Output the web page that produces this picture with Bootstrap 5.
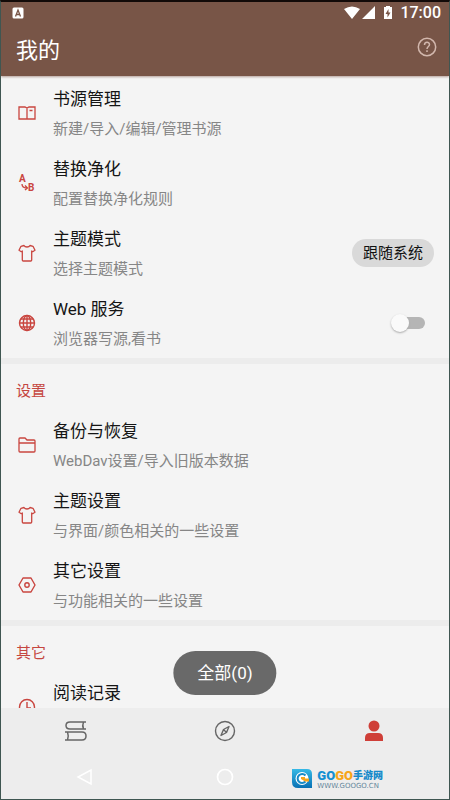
<!DOCTYPE html>
<html lang="zh-CN">
<head>
<meta charset="utf-8">
<meta name="viewport" content="width=device-width, initial-scale=1">
<title>我的</title>
<link href="https://cdn.jsdelivr.net/npm/bootstrap@5.3.0/dist/css/bootstrap.min.css" rel="stylesheet">
<style>
body{font-family:Roboto,"Noto Sans CJK SC",sans-serif;background:#f4f4f4;color:#151515}
.app{height:100vh;border:1px solid #3f5651;border-top:2px solid #120a08;overflow:hidden}
.top{background:#785547;color:#fff;box-shadow:0 1px 2px #b5a09a;z-index:1}
.status{height:22px;padding:0 8px 0 11px;font-size:16px;line-height:22px;font-weight:500}
.bar{height:52px;padding:1px 12px 0 15px}
.bar h1{font-size:22px;line-height:32px;font-weight:400}
.list-area{min-height:0;overflow:hidden}
.group + .group{border-top:6px solid #ececec}
.group:first-child{padding-top:2px}
.group h2{height:46px;padding:15px 15px 0;font-size:15px;line-height:24px;font-weight:400;color:#c5463f}
.entry{height:70px;padding:0 15px;color:inherit}
.entry-icon{width:22px;height:22px;color:#c9453f}
.entry-text{padding:8px 0 0 15px;align-self:flex-start}
.entry-title{font-size:17px;line-height:26px}
.entry-note{font-size:15px;line-height:22px;color:#868686;padding-top:6px}
.pill{background:#d9d9d9;font-size:15px;line-height:20px;padding:4px 11px;color:#111}
.toggle{appearance:none;width:30px;height:12px;border-radius:6px;background:#b5b5b5;margin:0 9px 0 0;position:relative}
.toggle::before{content:"";position:absolute;left:-4px;top:-3px;width:18px;height:18px;border-radius:50%;background:#fafafa;box-shadow:0 1px 2px #aaa}
.toggle:checked::before{left:16px}
.tabs{height:46px;background:#ededed}
.tabs a{color:#666}
.tabs a.active{color:#cf3f38}
.sysnav{height:45px;background:#ededed;color:#fff}
.sysnav button{color:#fff;line-height:1}
.toast-pill{position:absolute;left:50%;bottom:104px;transform:translateX(-50%);background:#696969;color:#fff;font-size:17px;line-height:24px;padding:10px 24px}
.brand{padding-right:66px}
.brand-name{font-size:13px;line-height:15px;font-weight:900}
.brand-name small{font-size:10px;color:#1689ca;font-weight:900}
.brand-go{color:#158fd2}.brand-go2{color:#f6a51b}
.brand-url{font-family:"DejaVu Sans",sans-serif;font-size:7px;line-height:6px;color:#65879b}
</style>
<script src="https://cdn.jsdelivr.net/npm/bootstrap@5.3.0/dist/js/bootstrap.bundle.min.js"></script>
</head>
<body>
<svg class="d-none" aria-hidden="true">
<symbol id="book" viewBox="0 0 22 22"><path d="M3 5h6l2 1 2-1h6v12H3zM11 6v11M13.500 8.500h3" fill="none" stroke="currentColor" stroke-width="1.300"/></symbol>
<symbol id="swap" viewBox="0 0 22 22"><path d="M6 12c0 3 2 4 5 4M9 13.500l2.500 2.500L9 18" fill="none" stroke="currentColor" stroke-width="1.300"/><text x="3" y="10" font-size="10" font-weight="700" fill="currentColor">A</text><text x="12" y="19" font-size="10" font-weight="700" fill="currentColor">B</text></symbol>
<symbol id="shirt" viewBox="0 0 22 22"><path d="M8 3.500c1 2 5 2 6 0l3 .8 2 4-2.300 1.400-1-.7V18q0 1-1 1H7.300q-1 0-1-1V9l-1 .7L3 8.300l2-4z" fill="none" stroke="currentColor" stroke-width="1.300" stroke-linejoin="round"/></symbol>
<symbol id="globe" viewBox="0 0 22 22"><g fill="none" stroke="currentColor" stroke-width="1.400"><circle cx="11" cy="11" r="7.500"/><ellipse cx="11" cy="11" rx="3.700" ry="7.500"/><path d="M11 3v16M3 11h16M4.500 7h13M4.500 15h13"/></g></symbol>
<symbol id="folder" viewBox="0 0 22 22"><path d="M4 4h5l2 2h7q1 0 1 1v10q0 1-1 1H4q-1 0-1-1V5q0-1 1-1zM3 9h16" fill="none" stroke="currentColor" stroke-width="1.300"/></symbol>
<symbol id="hex" viewBox="0 0 22 22"><g fill="none" stroke="currentColor" stroke-width="1.400" stroke-linejoin="round"><path d="M7 4h8l4 7-4 7H7l-4-7z"/><circle cx="11" cy="11" r="2.200"/></g></symbol>
<symbol id="clock" viewBox="0 0 22 22"><path d="M11 6v6h4" fill="none" stroke="currentColor" stroke-width="1.400"/><circle cx="11" cy="11" r="7.500" fill="none" stroke="currentColor" stroke-width="1.400"/></symbol>
</svg>
<div class="app d-flex flex-column position-relative">
<header class="top flex-shrink-0">
<div class="status d-flex align-items-center justify-content-between">
<svg width="12" height="12" viewBox="0 0 12 12" aria-hidden="true"><rect x=".5" y=".5" width="11" height="11" rx="1.500" fill="#fff"/><path d="M3.500 9.500L6 3l2.500 6.500M4.500 7.500h3" fill="none" stroke="#785547" stroke-width="1.300"/></svg>
<div class="d-flex align-items-center">
<svg width="48" height="16" viewBox="0 0 48 16" fill="#fff" class="me-1" aria-hidden="true"><path d="M0 4Q8-1 16 4L8 14zM31 1v13H18zM40 2h2V1h4v1h2v12h-8z"/><path d="M44.500 4l-3 5h2v3.500l3-5h-2z" fill="#785547"/></svg>
<span class="ps-1">17:00</span>
</div>
</div>
<div class="bar d-flex align-items-center justify-content-between">
<h1 class="m-0">我的</h1>
<button class="btn p-0 border-0 d-flex mb-2" aria-label="帮助"><svg width="20" height="20" viewBox="0 0 20 20" fill="none" stroke="#d2b7ad" stroke-width="1.500"><circle cx="10" cy="10" r="8.700"/><path d="M7.500 8c0-3.500 5-3.500 5-.5 0 2-2.500 2-2.500 4.500M10 13.200v1.800"/></svg></button>
</div>
</header>
<main class="list-area flex-grow-1">
<section class="group">
<a href="#" class="entry d-flex align-items-center text-decoration-none"><svg class="entry-icon"><use href="#book"/></svg><div class="entry-text"><div class="entry-title">书源管理</div><div class="entry-note">新建/导入/编辑/管理书源</div></div></a>
<a href="#" class="entry d-flex align-items-center text-decoration-none"><svg class="entry-icon"><use href="#swap"/></svg><div class="entry-text"><div class="entry-title">替换净化</div><div class="entry-note">配置替换净化规则</div></div></a>
<div class="entry d-flex align-items-center"><svg class="entry-icon"><use href="#shirt"/></svg><div class="entry-text flex-grow-1"><div class="entry-title">主题模式</div><div class="entry-note">选择主题模式</div></div><button class="pill btn border-0 rounded-pill">跟随系统</button></div>
<div class="entry d-flex align-items-center"><svg class="entry-icon"><use href="#globe"/></svg><label for="web" class="entry-text flex-grow-1"><span class="entry-title d-block">Web 服务</span><span class="entry-note d-block">浏览器写源,看书</span></label><input type="checkbox" role="switch" id="web" class="toggle"></div>
</section>
<section class="group">
<h2 class="m-0">设置</h2>
<a href="#" class="entry d-flex align-items-center text-decoration-none"><svg class="entry-icon"><use href="#folder"/></svg><div class="entry-text"><div class="entry-title">备份与恢复</div><div class="entry-note">WebDav设置/导入旧版本数据</div></div></a>
<a href="#" class="entry d-flex align-items-center text-decoration-none"><svg class="entry-icon"><use href="#shirt"/></svg><div class="entry-text"><div class="entry-title">主题设置</div><div class="entry-note">与界面/颜色相关的一些设置</div></div></a>
<a href="#" class="entry d-flex align-items-center text-decoration-none"><svg class="entry-icon"><use href="#hex"/></svg><div class="entry-text"><div class="entry-title">其它设置</div><div class="entry-note">与功能相关的一些设置</div></div></a>
</section>
<section class="group">
<h2 class="m-0">其它</h2>
<a href="#" class="entry d-flex align-items-center text-decoration-none"><svg class="entry-icon"><use href="#clock"/></svg><div class="entry-text"><div class="entry-title">阅读记录</div></div></a>
</section>
</main>
<nav class="tabs d-flex flex-shrink-0" aria-label="主导航">
<a href="#" class="col d-flex align-items-center justify-content-center" aria-label="书架"><svg width="24" height="24" viewBox="0 0 24 24" fill="none" stroke="currentColor" stroke-width="1.500"><path d="M22 3H6Q2 3 2 6.500T6 10h16M19.500 3q-1.500 3.500 0 7M1 13h17q4 0 4 4t-4 4H1M3.500 13q1.500 4 0 8"/></svg></a>
<a href="#" class="col d-flex align-items-center justify-content-center" aria-label="发现"><svg width="24" height="24" viewBox="0 0 24 24" fill="none" stroke="currentColor" stroke-width="1.400"><circle cx="12" cy="12" r="9.500"/><path d="M16 7.500l-2.500 6L8 16.500l2.500-6zM10.500 10.500l3 3" stroke-linejoin="round"/></svg></a>
<a href="#" class="active col d-flex align-items-center justify-content-center" aria-label="我的"><svg width="24" height="24" viewBox="0 0 24 24" fill="currentColor"><circle cx="12" cy="7" r="5.500"/><path d="M3 22v-3q0-5 5-5h8q5 0 5 5v3z"/></svg></a>
</nav>
<div class="sysnav row g-0 flex-shrink-0 align-items-center">
<div class="col-4 d-flex justify-content-end"><button class="btn border-0 p-0 me-5" aria-label="返回"><svg width="18" height="18" viewBox="0 0 18 18" class="me-2" fill="none" stroke="#fff" stroke-width="1.500"><path d="M15 2v14L2 9z"/></svg></button></div>
<div class="col-4 text-center"><button class="btn border-0 p-0" aria-label="主页"><svg width="18" height="18" viewBox="0 0 18 18" fill="none" stroke="#fff" stroke-width="1.700"><circle cx="9" cy="9" r="7.500"/></svg></button></div>
<div class="brand col-4 d-flex align-items-center justify-content-end pt-1">
<svg width="21" height="21" viewBox="0 0 21 21" class="flex-shrink-0 me-1" aria-hidden="true"><defs><linearGradient id="lg" x2="0" y2="1"><stop stop-color="#36b9e6"/><stop offset="1" stop-color="#0871b4"/></linearGradient></defs><path d="M0 1h15q5 0 5 5v14H6q-6 0-6-6z" fill="url(#lg)"/><circle cx="10" cy="10.500" r="6.500" fill="#fff"/><path d="M13.500 7.500a4.500 4.500 0 1 0 0 6" fill="none" stroke="#168bc8" stroke-width="2"/><path d="M9 9h4v1.500h4v3h-4L9 11z" fill="#f5a51d"/></svg>
<div class="flex-shrink-0"><div class="brand-name d-flex align-items-center"><span class="brand-go">GO</span><span class="brand-go2">GO</span><small>手游网</small></div><div class="brand-url">WWW.GOOGO.CN</div></div>
</div>
</div>
<div class="toast-pill rounded-pill text-nowrap" role="status">全部(0)</div>
</div>
</body>
</html>
